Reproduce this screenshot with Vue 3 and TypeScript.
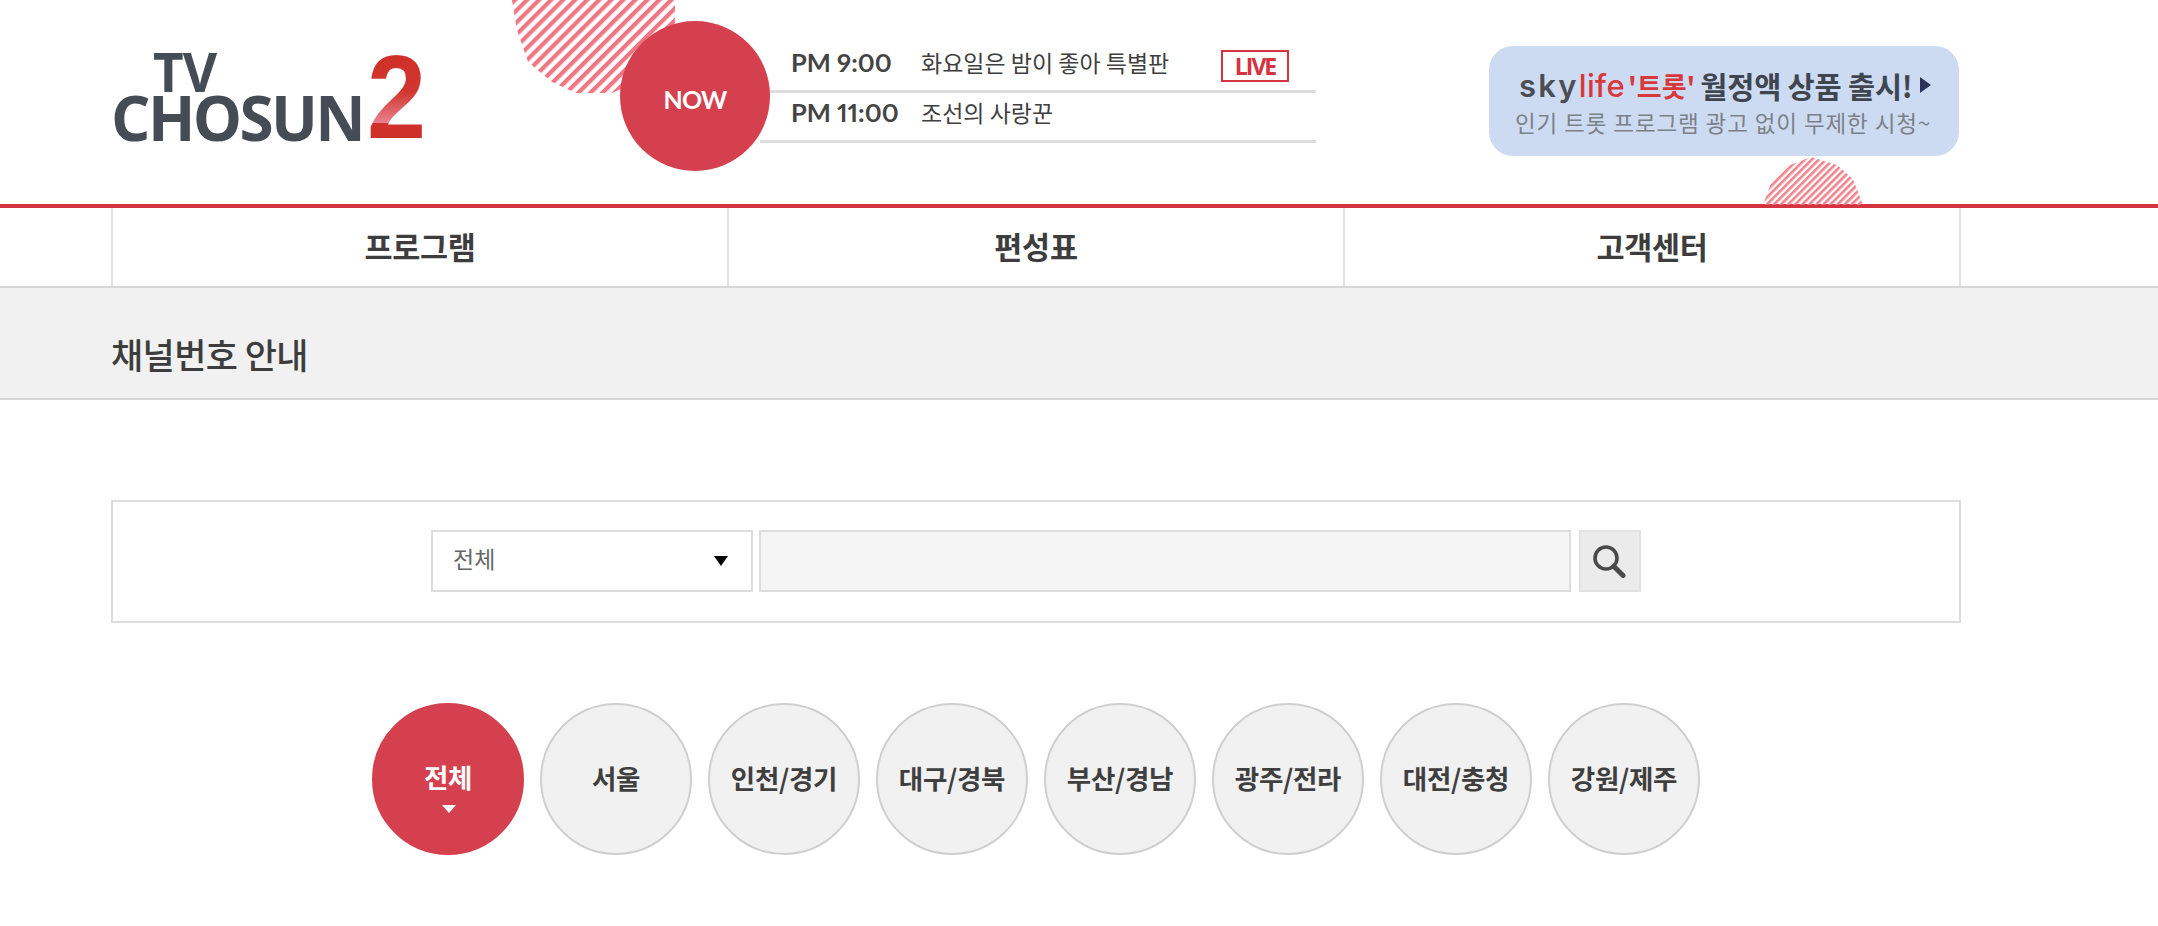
<template>
  <div class="page">
    <!-- 상단 헤더 -->
    <header class="header">
      <div class="wrap header__inner">
        <a class="logo">
          <span class="logo__words">
            <span class="logo__tv">TV</span>
            <span class="logo__name">CHOSUN</span>
          </span>
          <span class="logo__num">2</span>
        </a>

        <div class="now">
          <svg class="stripe stripe--big" viewBox="0 0 164 94" width="164" height="94">
            <defs>
              <pattern id="hatchBig" width="8.5" height="8.5" patternUnits="userSpaceOnUse" patternTransform="rotate(45)">
                <rect width="4.2" height="8.5" fill="#ef7683" />
              </pattern>
            </defs>
            <polygon points="0,0 163,0 163,30 150,62 124,82 100,93 64,93 40,82 16,62 5,30" fill="url(#hatchBig)" />
          </svg>
          <div class="now__badge">NOW</div>
          <ul class="now__list">
            <li v-for="item in schedule" :key="item.time" class="now__row">
              <span class="now__time">{{ item.time }}</span>
              <span class="now__title">{{ item.title }}</span>
              <span v-if="item.live" class="now__live">LIVE</span>
            </li>
          </ul>
        </div>

        <div class="promo">
          <div class="promo__line1">
            <span class="promo__sky">sky</span><span class="promo__life">life</span>
            <span class="promo__red">'트롯'</span>
            <span class="promo__main">월정액 상품 출시!</span>
            <i class="promo__arrow" />
          </div>
          <div class="promo__line2">인기 트롯 프로그램 광고 없이 무제한 시청~</div>
          <svg class="stripe stripe--small" viewBox="0 0 100 48" width="100" height="48">
            <defs>
              <pattern id="hatchSmall" width="5" height="5" patternUnits="userSpaceOnUse" patternTransform="rotate(45)">
                <rect width="2.6" height="5" fill="#f0818d" />
              </pattern>
            </defs>
            <polygon points="0,48 8,26 22,10 48,0 74,8 90,22 100,48" fill="url(#hatchSmall)" />
          </svg>
        </div>
      </div>
    </header>

    <!-- 메뉴 -->
    <nav class="gnb">
      <div class="wrap gnb__inner">
        <a v-for="menu in menus" :key="menu" class="gnb__item">{{ menu }}</a>
      </div>
    </nav>

    <div class="title-bar">
      <h1 class="wrap title-bar__text">채널번호 안내</h1>
    </div>

    <!-- 검색 -->
    <main class="wrap content">
      <div class="search">
        <div class="search__select">
          <span class="search__value">전체</span>
          <i class="search__caret" />
        </div>
        <div class="search__input" />
        <button class="search__btn" type="button" aria-label="검색">
          <svg viewBox="0 0 34 34" width="34" height="34" fill="none" stroke="#4a4a4a">
            <circle cx="14" cy="14" r="11" stroke-width="3.6" />
            <path d="M22 22.5L31 31.5" stroke-width="5" stroke-linecap="round" />
          </svg>
        </button>
      </div>

      <ul class="regions">
        <li
          v-for="(region, i) in regions"
          :key="region"
          class="regions__item"
          :class="{ 'regions__item--on': i === 0 }"
        >
          {{ region }}
          <i v-if="i === 0" class="regions__caret" />
        </li>
      </ul>
    </main>
  </div>
</template>

<script setup lang="ts">
interface ScheduleItem {
  time: string;
  title: string;
  live?: boolean;
}

const schedule: ScheduleItem[] = [
  { time: 'PM 9:00', title: '화요일은 밤이 좋아 특별판', live: true },
  { time: 'PM 11:00', title: '조선의 사랑꾼' },
];

const menus: string[] = ['프로그램', '편성표', '고객센터'];

const regions: string[] = [
  '전체',
  '서울',
  '인천/경기',
  '대구/경북',
  '부산/경남',
  '광주/전라',
  '대전/충청',
  '강원/제주',
];
</script>

<style>
html,
body {
  margin: 0;
  background: #fff;
}
</style>

<style scoped>
.page {
  min-height: 926px;
  overflow: hidden;
  font-family: "Noto Sans CJK KR", "Noto Sans", sans-serif;
  color: #3f3f3f;
}

.wrap {
  width: 1850px;
  margin-left: 111px;
  box-sizing: border-box;
}

ul {
  list-style: none;
  margin: 0;
  padding: 0;
}

/* header */
.header {
  height: 208px;
  box-sizing: border-box;
  border-bottom: 4px solid #d5333f;
}

.header__inner {
  display: flex;
  height: 204px;
  position: relative;
}

.logo {
  display: flex;
  width: 509px;
  padding-top: 55px;
  box-sizing: border-box;
  flex: none;
  align-items: flex-start;
}

.logo__words {
  display: flex;
  flex-direction: column;
  align-items: flex-start;
  width: 249px;
  flex: none;
  font-family: "Open Sans", sans-serif;
  font-weight: 700;
  color: #464c56;
}

.logo__tv {
  height: 37px;
  margin-left: 42px;
  font-size: 53px;
  line-height: 33px;
  letter-spacing: -1px;
}

.logo__name {
  height: 50px;
  font-size: 62px;
  line-height: 50px;
  letter-spacing: -2.6px;
  white-space: nowrap;
}

.logo__num {
  margin: -2px 0 0 7px;
  font-family: "Liberation Sans", sans-serif;
  font-weight: 700;
  font-size: 118px;
  line-height: 88px;
  letter-spacing: -2px;
  transform: scaleX(0.9);
  transform-origin: left;
  background: linear-gradient(180deg, #cf3029 0, #d0372f 44%, #e9808f 79%, #cf3029 80%, #cf3029 100%);
  -webkit-background-clip: text;
  background-clip: text;
  color: transparent;
}

.now {
  position: relative;
  display: flex;
  width: 870px;
  flex: none;
}

.stripe {
  position: absolute;
  display: block;
}

.stripe--big {
  left: -108px;
  top: 0;
}

.now__badge {
  position: relative;
  z-index: 1;
  display: flex;
  align-items: center;
  justify-content: center;
  width: 150px;
  height: 150px;
  margin-top: 21px;
  flex: none;
  border-radius: 50%;
  background: #d5404f;
  color: #fff;
  font-family: "Lato", sans-serif;
  font-weight: 700;
  font-size: 25px;
  letter-spacing: -0.8px;
  padding-top: 6px;
  box-sizing: border-box;
}

.now__list {
  width: 556px;
  margin: 40px 0 0 -10px;
  flex: none;
}

.now__row {
  display: flex;
  align-items: center;
  height: 50px;
  box-sizing: border-box;
  border-bottom: 3px solid #ddd;
  padding-left: 31px;
}

.now__row:first-child {
  height: 53px;
  padding-bottom: 7px;
}

.now__row:last-child {
  padding-bottom: 10px;
}

.now__time {
  width: 130px;
  flex: none;
  font-family: "Lato", sans-serif;
  font-weight: 700;
  font-size: 25.5px;
  font-variant-numeric: proportional-nums;
  color: #444;
}

.now__title {
  width: 300px;
  flex: none;
  font-size: 23px;
  color: #3f3f3f;
}

.now__live {
  display: flex;
  align-items: center;
  justify-content: center;
  width: 68px;
  height: 32px;
  margin-top: 8px;
  box-sizing: border-box;
  border: 2.5px solid #d5333f;
  color: #d5333f;
  font-family: "Open Sans", sans-serif;
  font-weight: 700;
  font-size: 23px;
  letter-spacing: -2px;
}

.promo {
  position: relative;
  width: 470px;
  height: 110px;
  margin: 46px 0 0 -1px;
  flex: none;
  padding-top: 18px;
  box-sizing: border-box;
  border-radius: 24px;
  background: #cddbf2;
  text-align: center;
}

.promo__line1 {
  display: flex;
  align-items: center;
  height: 42px;
  padding-left: 30px;
  white-space: nowrap;
  font-weight: 700;
  font-size: 28px;
  color: #3f4650;
}

.promo__sky {
  font-family: "Inter", sans-serif;
  font-weight: 600;
  font-size: 31px;
  letter-spacing: 2.2px;
  color: #4b4f55;
}

.promo__life {
  font-family: "Inter", sans-serif;
  font-weight: 500;
  font-size: 31px;
  letter-spacing: 0.4px;
  color: #d8383a;
}

.promo__red {
  margin-left: 3px;
  color: #d8383a;
  font-size: 27px;
  letter-spacing: 0;
}

.promo__main {
  margin-left: 5px;
  font-size: 29.5px;
  letter-spacing: -0.2px;
}

.promo__arrow {
  width: 0;
  height: 0;
  margin-left: 7px;
  border-style: solid;
  border-width: 8px 0 8px 11px;
  border-color: transparent transparent transparent #2a3357;
}

.promo__line2 {
  margin-top: -1px;
  padding-left: 26px;
  text-align: left;
  white-space: nowrap;
  font-size: 22.5px;
  line-height: 34px;
  letter-spacing: 0.9px;
  color: #7c8188;
}

.stripe--small {
  left: 274px;
  top: 111px;
}

/* menu */
.gnb {
  height: 80px;
  box-sizing: border-box;
  border-bottom: 2px solid #d6d6d6;
}

.gnb__inner {
  display: grid;
  grid-template-columns: repeat(3, 1fr);
  height: 78px;
  border-left: 2px solid #e3e3e3;
}

.gnb__item {
  display: flex;
  align-items: center;
  justify-content: center;
  border-right: 2px solid #e3e3e3;
  padding-bottom: 3px;
  font-weight: 700;
  font-size: 30.5px;
  letter-spacing: -0.3px;
  color: #3d3d3d;
}

.title-bar {
  height: 112px;
  box-sizing: border-box;
  border-bottom: 2px solid #d6d6d6;
  background: #f1f1f1;
}

.title-bar__text {
  margin-top: 0;
  margin-bottom: 0;
  padding-top: 37px;
  font-weight: 500;
  font-size: 35px;
  line-height: 58px;
  letter-spacing: -0.6px;
  color: #3d3d3d;
}

/* search */
.content {
  padding-top: 100px;
}

.search {
  display: flex;
  justify-content: center;
  align-items: stretch;
  height: 123px;
  padding: 28px 0 29px;
  box-sizing: border-box;
  border: 2px solid #ddd;
}

.search__select {
  display: flex;
  align-items: center;
  justify-content: space-between;
  width: 322px;
  padding: 0 23px 0 20px;
  box-sizing: border-box;
  border: 2px solid #ddd;
  font-size: 23px;
  font-weight: 400;
  color: #666;
}

.search__value {
  margin-bottom: 6px;
}

.search__caret {
  width: 0;
  height: 0;
  border-style: solid;
  border-width: 10px 7px 0;
  border-color: #000 transparent transparent;
}

.search__input {
  width: 812px;
  margin-left: 6px;
  box-sizing: border-box;
  border: 2px solid #ddd;
  background: #f5f5f5;
}

.search__btn {
  display: flex;
  align-items: center;
  justify-content: center;
  width: 62px;
  margin-left: 8px;
  padding: 0 3px 0 0;
  box-sizing: border-box;
  border: 2px solid #e2e2e2;
  background: #ebebeb;
}

/* regions */
.regions {
  display: flex;
  justify-content: center;
  gap: 16px;
  margin-top: 80px;
}

.regions__item {
  position: relative;
  display: flex;
  align-items: center;
  justify-content: center;
  width: 152px;
  height: 152px;
  padding-bottom: 4px;
  box-sizing: border-box;
  border: 2px solid #cfcfcf;
  border-radius: 50%;
  background: #f1f1f1;
  font-weight: 700;
  font-size: 26.5px;
  letter-spacing: -0.3px;
  color: #3f3f3f;
}

.regions__item--on {
  padding-bottom: 6px;
  border-color: #d5404f;
  background: #d5404f;
  color: #fff;
}

.regions__caret {
  position: absolute;
  left: 68px;
  top: 100px;
  width: 0;
  height: 0;
  border-style: solid;
  border-width: 8px 7.5px 0;
  border-color: #fff transparent transparent;
}
</style>
